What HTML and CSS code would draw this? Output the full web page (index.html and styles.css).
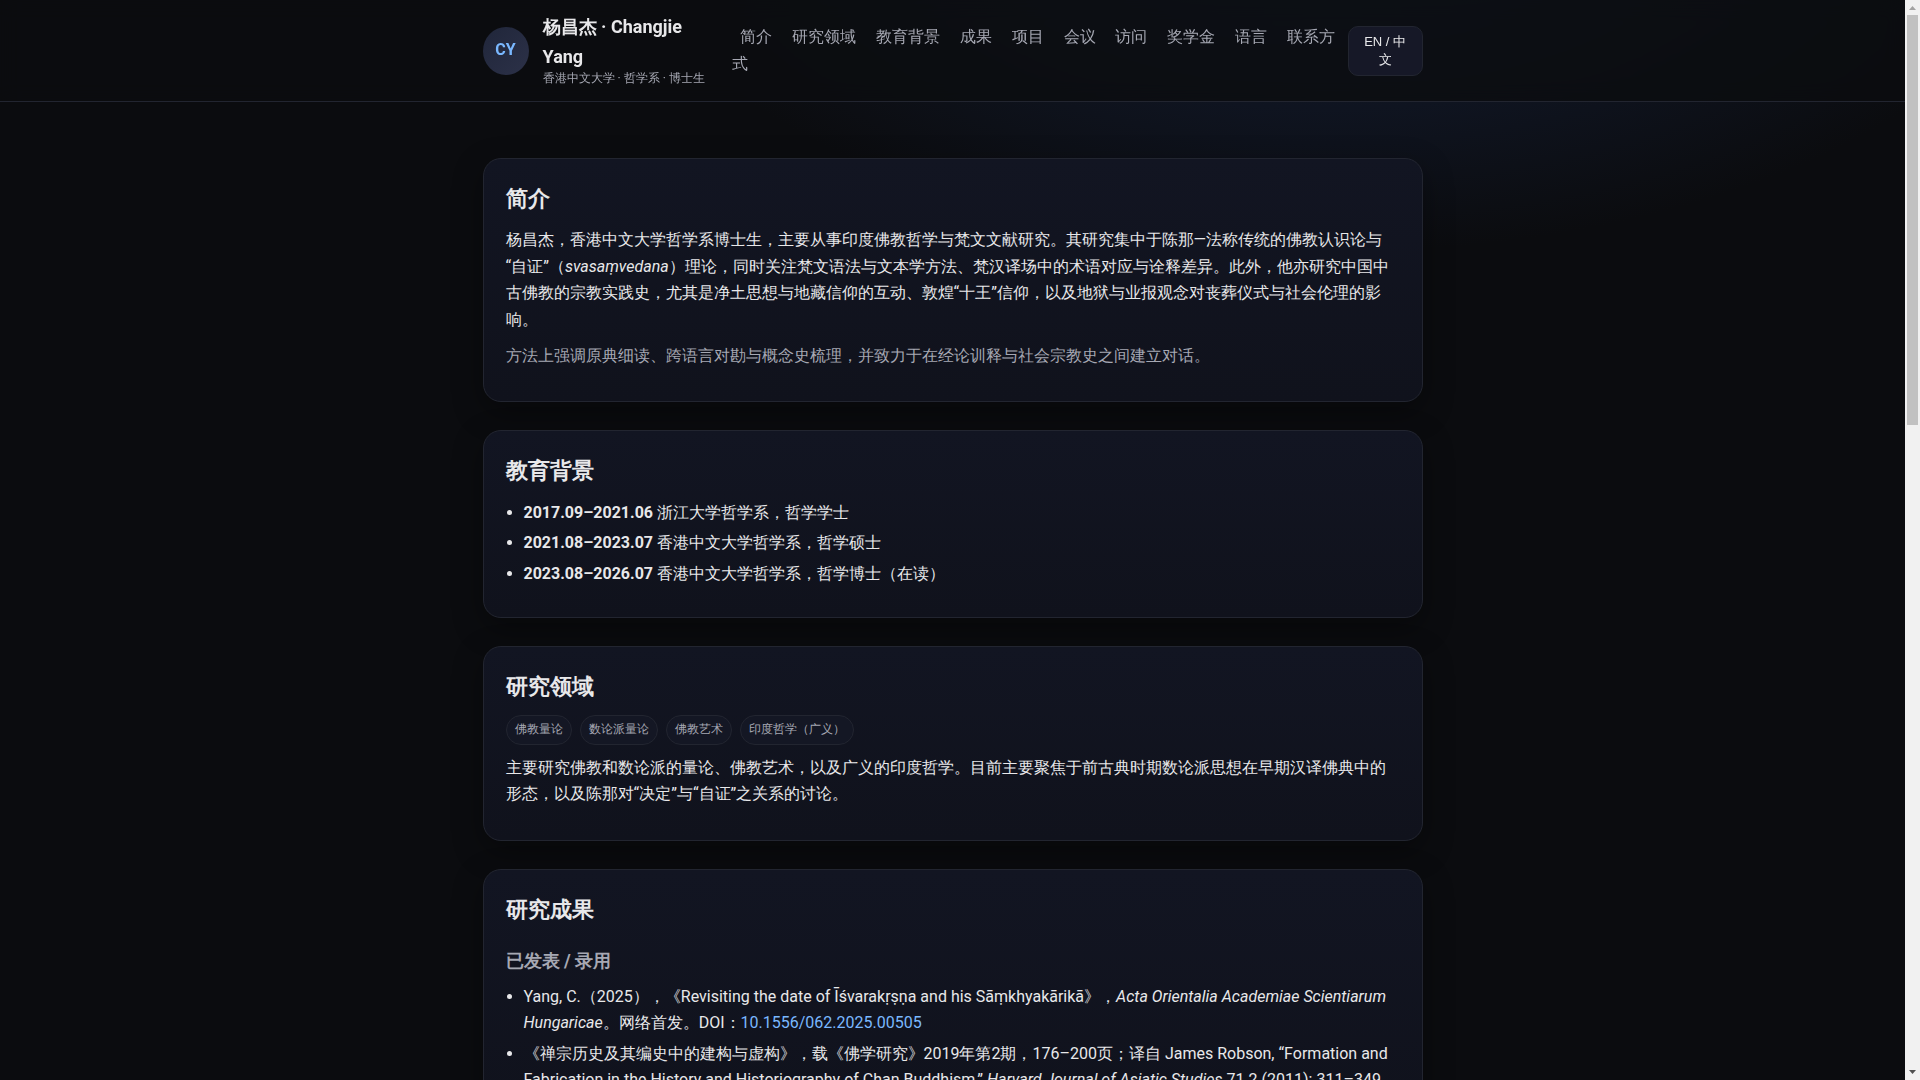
FILE: index.html
```html
<!DOCTYPE html>
<html lang="zh">
<head>
<meta charset="UTF-8" />
<meta name="viewport" content="width=device-width, initial-scale=1" />
<title>杨昌杰 · Changjie Yang</title>
<link rel="stylesheet" href="styles.css">
</head>
<body>

<header>
  <div class="container nav">
    <div class="brand">
      <div class="logo">CY</div>
      <div>
        <div class="name">杨昌杰 · Changjie Yang</div>
        <div class="tagline">香港中文大学 · 哲学系 · 博士生</div>
      </div>
    </div>
    <nav>
      <a href="#about">简介</a>
      <a href="#research">研究领域</a>
      <a href="#education">教育背景</a>
      <a href="#publications">成果</a>
      <a href="#projects">项目</a>
      <a href="#conferences">会议</a>
      <a href="#visits">访问</a>
      <a href="#awards">奖学金</a>
      <a href="#languages">语言</a>
      <a href="#contact">联系方式</a>
    </nav>
    <button class="lang-toggle" type="button">EN / 中文</button>
  </div>
</header>

<main class="container">
  <section id="about" class="card">
    <h2>简介</h2>
    <p>杨昌杰，香港中文大学哲学系博士生，主要从事印度佛教哲学与梵文文献研究。其研究集中于陈那—法称传统的佛教认识论与“自证”（<em>svasaṃvedana</em>）理论，同时关注梵文语法与文本学方法、梵汉译场中的术语对应与诠释差异。此外，他亦研究中国中古佛教的宗教实践史，尤其是净土思想与地藏信仰的互动、敦煌“十王”信仰，以及地狱与业报观念对丧葬仪式与社会伦理的影响。</p>
    <p class="muted">方法上强调原典细读、跨语言对勘与概念史梳理，并致力于在经论训释与社会宗教史之间建立对话。</p>
  </section>

  <section id="education" class="card">
    <h2>教育背景</h2>
    <ul>
      <li><strong>2017.09–2021.06</strong> 浙江大学哲学系，哲学学士</li>
      <li><strong>2021.08–2023.07</strong> 香港中文大学哲学系，哲学硕士</li>
      <li><strong>2023.08–2026.07</strong> 香港中文大学哲学系，哲学博士（在读）</li>
    </ul>
  </section>

  <section id="research" class="card">
    <h2>研究领域</h2>
    <div class="tags">
      <span class="tag">佛教量论</span>
      <span class="tag">数论派量论</span>
      <span class="tag">佛教艺术</span>
      <span class="tag">印度哲学（广义）</span>
    </div>
    <p>主要研究佛教和数论派的量论、佛教艺术，以及广义的印度哲学。目前主要聚焦于前古典时期数论派思想在早期汉译佛典中的形态，以及陈那对“决定”与“自证”之关系的讨论。</p>
  </section>

  <section id="publications" class="card">
    <h2>研究成果</h2>
    <h3>已发表 / 录用</h3>
    <ul>
      <li>Yang, C.（2025），《Revisiting the date of Īśvarakṛṣṇa and his Sāṃkhyakārikā》，<em>Acta Orientalia Academiae Scientiarum Hungaricae</em>。网络首发。DOI：<a href="https://doi.org/10.1556/062.2025.00505">10.1556/062.2025.00505</a></li>
      <li>《禅宗历史及其编史中的建构与虚构》，载《佛学研究》2019年第2期，176–200页；译自 James Robson, “Formation and Fabrication in the History and Historiography of Chan Buddhism,” <em>Harvard Journal of Asiatic Studies</em> 71.2 (2011): 311–349.</li>
    </ul>
  </section>
</main>

<div class="scrollbar" aria-hidden="true">
  <svg class="arrow" viewBox="0 0 15 15"><path d="M4 10 7.500 6 11 10z" /></svg>
  <div class="track"><div class="thumb"></div></div>
  <svg class="arrow down" viewBox="0 0 15 15"><path d="M4 5 7.500 9 11 5z" /></svg>
</div>

</body>
</html>
```

FILE: styles.css
```css
:root {
  --bg: #0b0c0f;
  --chip: #161827;
  --text: #e8e8ea;
  --muted: #a6a8b3;
  --link: #7ab8ff;
  --line: #222530;
}
* {
  box-sizing: border-box;
}
html {
  margin-right: 15px;
  background: radial-gradient(1200px 600px at 70% -10%, #15203a, transparent 60%) 0 0 / 100% 100vh no-repeat, var(--bg);
}
body {
  margin: 0;
  font-family: Roboto, sans-serif;
  line-height: 1.65;
  color: var(--text);
}
a {
  color: var(--link);
  text-decoration: none;
}
.container {
  max-width: 980px;
  margin: 0 auto;
  padding: 0 20px;
}
header {
  position: sticky;
  top: 0;
  z-index: 10;
  background: rgba(11, 12, 15, 0.8);
  backdrop-filter: blur(10px);
  border-bottom: 1px solid var(--line);
}
.nav {
  display: flex;
  align-items: center;
  justify-content: space-between;
  gap: 12px;
  padding: 12px 20px;
}
.brand {
  display: flex;
  align-items: center;
  gap: 14px;
}
.logo {
  width: 48px;
  height: 48px;
  border-radius: 50%;
  display: grid;
  place-items: center;
  background: linear-gradient(135deg, #20263a, #2c3148);
  color: var(--link);
  font-weight: 700;
}
.name {
  font-size: 18px;
  font-weight: 700;
}
.tagline {
  margin-top: -2px;
  font-size: 12px;
  color: var(--muted);
}
nav a {
  margin: 0 8px;
  color: var(--muted);
}
.lang-toggle {
  padding: 6px 10px;
  border: 1px solid var(--line);
  border-radius: 10px;
  background: var(--chip);
  color: var(--text);
  font-size: 13px;
}
main.container {
  padding-top: 28px;
}
.card {
  margin: 28px 0;
  padding: 22px;
  border: 1px solid var(--line);
  border-radius: 18px;
  background: linear-gradient(180deg, #121522, #10121c);
  box-shadow: 0 10px 30px rgba(0, 0, 0, 0.35);
}
h2 {
  margin: 0 0 10px;
  font-size: 22px;
}
h3 {
  margin: 18px 0 8px;
  font-size: 18px;
  color: var(--muted);
}
p {
  margin: 10px 0;
}
.muted {
  color: var(--muted);
}
ul {
  margin: 8px 0;
  padding-left: 18px;
}
li + li {
  margin-top: 4px;
}
.tags {
  display: flex;
  flex-wrap: wrap;
  gap: 8px;
}
.tag {
  padding: 4px 8px;
  border: 1px solid var(--line);
  border-radius: 999px;
  background: #141724;
  color: var(--muted);
  font-size: 12px;
}
.scrollbar {
  position: fixed;
  top: 0;
  right: 0;
  bottom: 0;
  z-index: 20;
  display: flex;
  flex-direction: column;
  width: 15px;
  background: #f1f1f1;
}
.arrow {
  height: 15px;
  fill: #a3a3a3;
}
.arrow.down {
  fill: #505050;
}
.track {
  flex: 1;
  padding: 0 2px;
}
.thumb {
  height: 39%;
  background: #c1c1c1;
}
```
